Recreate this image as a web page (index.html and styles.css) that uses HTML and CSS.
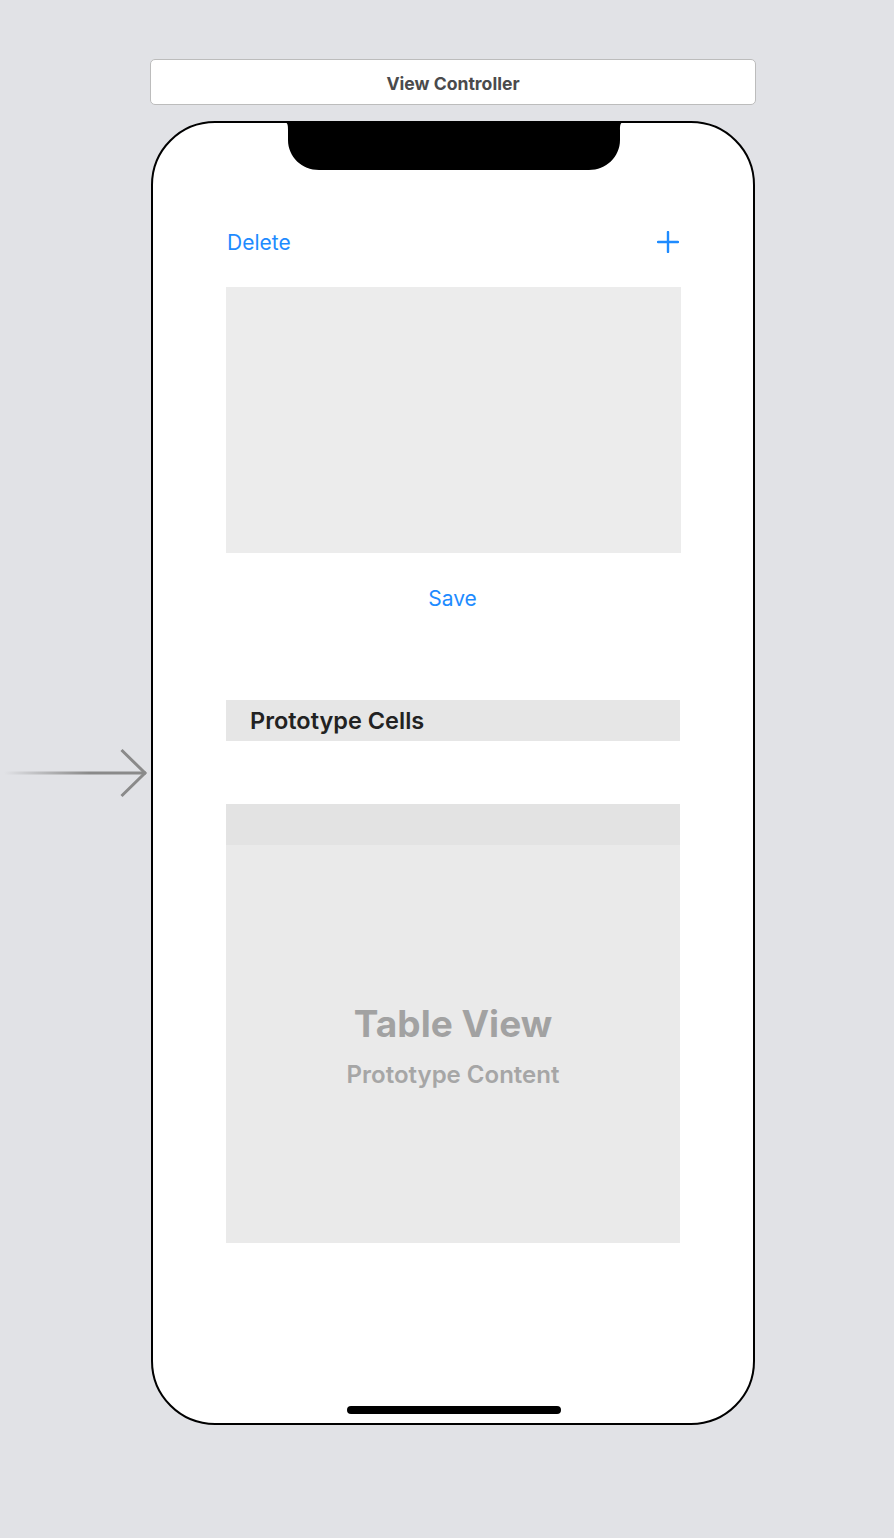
FILE: index.html
```html
<!DOCTYPE html>
<html>
<head>
<meta charset="utf-8">
<link rel="stylesheet" href="styles.css">
</head>
<body>
<div class="canvas">
  <div class="scene-title">View Controller</div>
  <div class="phone">
    <svg class="notch" width="340" height="48" viewBox="0 0 340 48"><path d="M0 0H340C336 0 336 4 336 8V18C336 35 322 48 305 48H35C18 48 4 35 4 18V8C4 4 4 0 0 0Z" fill="#000"/></svg>
    <div class="navbar">
      <span class="nav-btn">Delete</span>
      <svg class="plus" width="22" height="22" viewBox="0 0 22 22"><path d="M11 1V21M1 11H21" stroke="#1e8bff" stroke-width="2.4" stroke-linecap="round"/></svg>
    </div>
    <div class="image-box"></div>
    <div class="save-row"><span class="nav-btn">Save</span></div>
    <div class="section-header">Prototype Cells</div>
    <div class="table">
      <div class="table-head"></div>
      <div class="table-body">
        <div class="tv-title">Table View</div>
        <div class="tv-sub">Prototype Content</div>
      </div>
    </div>
    <div class="home-indicator"></div>
  </div>
  <svg class="entry-arrow" width="152" height="56" viewBox="0 0 152 56">
    <defs>
      <linearGradient id="g" x1="0" x2="1" y1="0" y2="0">
        <stop offset="0" stop-color="#8a8a8a" stop-opacity="0"/>
        <stop offset="0.6" stop-color="#8a8a8a" stop-opacity="1"/>
        <stop offset="1" stop-color="#8a8a8a"/>
      </linearGradient>
    </defs>
    <rect x="4" y="26.5" width="142" height="3" fill="url(#g)"/>
    <path d="M121.5 5L145 28L121.5 51" fill="none" stroke="#8a8a8a" stroke-width="3"/>
  </svg>
</div>
</body>
</html>
```

FILE: styles.css
```css
* { box-sizing: border-box; }
html, body { margin: 0; padding: 0; }
body {
  background: #e1e2e6;
  font-family: Inter, "Noto Sans", "Liberation Sans", sans-serif;
  width: 894px;
  height: 1538px;
}
.canvas {
  position: relative;
  padding: 59px 0 0 150px;
  display: flex;
  flex-direction: column;
  align-items: flex-start;
}
.scene-title {
  width: 606px;
  height: 46px;
  background: #fff;
  border: 1px solid #bcbcbc;
  border-radius: 5px;
  display: flex;
  align-items: center;
  justify-content: center;
  padding-top: 3px;
  font-weight: 700;
  font-size: 17.6px;
  color: #4a4a4c;
}
.phone {
  margin-top: 16px;
  margin-left: 1px;
  width: 604px;
  height: 1304px;
  background: #fff;
  border: 2px solid #000;
  border-radius: 64px;
  display: flex;
  flex-direction: column;
  padding: 0 72px 0 73px;
}
.notch {
  display: block;
  align-self: center;
  margin-top: -1px;
  flex: none;
}
.navbar {
  margin-top: 52px;
  height: 40px;
  display: flex;
  align-items: center;
  justify-content: space-between;
  padding: 0 2px 0 1px;
}
.nav-btn {
  color: #1e8bff;
  font-size: 21px;
  font-weight: 400;
}
.plus { display: block; }
.image-box {
  margin-top: 25px;
  height: 266px;
  background: #ececec;
  width: 455px;
}
.save-row {
  margin-top: 25px;
  height: 40px;
  display: flex;
  align-items: center;
  justify-content: center;
  padding-right: 2px;
}
.section-header {
  margin-top: 82px;
  height: 41px;
  width: 454px;
  background: #e6e6e6;
  display: flex;
  align-items: center;
  padding-left: 24px;
  font-size: 23.5px;
  font-weight: 600;
  color: #222;
}
.table {
  margin-top: 63px;
  width: 454px;
  height: 439px;
  display: flex;
  flex-direction: column;
}
.table-head {
  height: 41px;
  background: #e3e3e3;
}
.table-body {
  flex: 1;
  background: #eaeaea;
  display: flex;
  flex-direction: column;
  align-items: center;
  justify-content: center;
  padding-top: 1px;
}
.tv-title {
  font-size: 37px;
  font-weight: 700;
  color: #a2a2a2;
  line-height: 46px;
}
.tv-sub {
  margin-top: 14px;
  font-size: 24px;
  font-weight: 600;
  color: #a6a6a6;
  line-height: 28px;
}
.home-indicator {
  margin-top: auto;
  margin-bottom: 9px;
  align-self: center;
  width: 214px;
  height: 8px;
  border-radius: 4px;
  background: #000;
}
.entry-arrow {
  position: absolute;
  left: 0;
  top: 745px;
}
```
